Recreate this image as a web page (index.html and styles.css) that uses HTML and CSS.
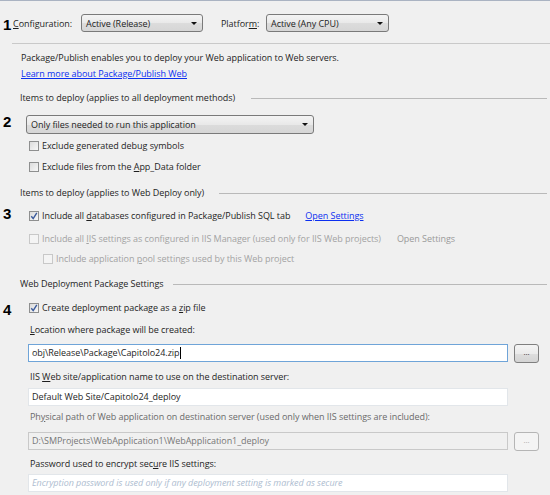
FILE: index.html
```html
<!DOCTYPE html>
<html>
<head>
<meta charset="utf-8">
<link rel="stylesheet" href="styles.css">
</head>
<body>
<div class="page">
  <div class="toolbar">
    <span class="num num-1">1</span>
    <span class="tlabel tlabel-cfg"><u>C</u>onfiguration:</span>
    <div class="select select-cfg"><span>Active (Release)</span><span class="arrow"></span></div>
    <span class="tlabel tlabel-plat">Platfor<u>m</u>:</span>
    <div class="select select-plat"><span>Active (Any CPU)</span><span class="arrow"></span></div>
  </div>
  <div class="sep"></div>

  <div class="line intro">Package/Publish enables you to deploy your Web application to Web servers.</div>
  <div class="line intro"><a class="link" href="#">Learn more about Package/Publish Web</a></div>

  <div class="heading h1"><span>Items to deploy (applies to all deployment methods)</span><span class="rule"></span></div>

  <div class="row row-2">
    <span class="num num-2">2</span>
    <div class="select select-files"><span>Only files needed to run this application</span><span class="arrow"></span></div>
  </div>
  <div class="check c1"><span class="box"></span><span>Exclude <u>g</u>enerated debug symbols</span></div>
  <div class="check c2"><span class="box"></span><span>Exclude files from the <u>A</u>pp_Data folder</span></div>

  <div class="heading h2"><span>Items to deploy (applies to Web Deploy only)</span><span class="rule"></span></div>

  <div class="row row-3">
    <span class="num num-3">3</span>
    <div class="check c3"><span class="box checked"><svg viewBox="0 0 10 10" width="10" height="10"><path d="M2.3 5.2 L4.2 7.6 L7.8 1.8" fill="none" stroke="#3a5a9c" stroke-width="1.4"/></svg></span><span>Include all <u>d</u>atabases configured in Package/Publish SQL tab</span><a class="link open-link" href="#">Open Settings</a></div>
  </div>
  <div class="check c4 disabled"><span class="box"></span><span>Include all <u>I</u>IS settings as configured in IIS Manager (used only for IIS Web projects)</span><span class="open-dis">Open Settings</span></div>
  <div class="check c5 disabled"><span class="box"></span><span>Include application <u>p</u>ool settings used by this Web project</span></div>

  <div class="heading h3"><span>Web Deployment Package Settings</span><span class="rule"></span></div>

  <div class="row row-4">
    <span class="num num-4">4</span>
    <div class="check c6"><span class="box checked"><svg viewBox="0 0 10 10" width="10" height="10"><path d="M2.3 5.2 L4.2 7.6 L7.8 1.8" fill="none" stroke="#3a5a9c" stroke-width="1.4"/></svg></span><span>Create deployment package as a <u>z</u>ip file</span></div>
  </div>

  <div class="field-label l1"><u>L</u>ocation where package will be created:</div>
  <div class="field-row f1">
    <div class="input focused">obj\Release\Package\Capitolo24.zip<span class="caret"></span></div>
    <div class="btn">...</div>
  </div>

  <div class="field-label l2">IIS <u>W</u>eb site/application name to use on the destination server:</div>
  <div class="field-row f2">
    <div class="input soft">Default Web Site/Capitolo24_deploy</div>
  </div>

  <div class="field-label l3 dim">Ph<u>y</u>sical path of Web application on destination server (used only when IIS settings are included):</div>
  <div class="field-row f3">
    <div class="input off">D:\SMProjects\WebApplication1\WebApplication1_deploy</div>
    <div class="btn off">...</div>
  </div>

  <div class="field-label l4">Password used to encrypt sec<u>u</u>re IIS settings:</div>
  <div class="field-row f4">
    <div class="input soft placeholder">Encryption password is used only if any deployment setting is marked as secure</div>
  </div>
</div>
</body>
</html>
```

FILE: styles.css
```css
* { box-sizing: border-box; }
html, body { margin: 0; padding: 0; }
body {
  width: 550px;
  height: 495px;
  overflow: hidden;
  background: #f0f0f0;
  border-top: 1px solid #aab3c2;
  font-family: "Open Sans", "Noto Sans", sans-serif;
  font-size: 9px;
  letter-spacing: -0.05px;
  color: #1e1e1e;
}
u { text-decoration: underline; text-underline-offset: 1px; }

.page { display: flex; flex-direction: column; }

/* numbers (annotations) */
.num {
  font-family: "Liberation Sans", Arial, sans-serif;
  font-weight: bold;
  font-size: 15px;
  line-height: 16px;
  letter-spacing: 0;
  color: #000;
  flex: 0 0 auto;
}

/* toolbar */
.toolbar {
  display: flex;
  align-items: center;
  height: 18px;
  margin-top: 13px;
  padding-left: 3px;
}
.num-1 { width: 10px; margin-top: 4px; }
.tlabel { white-space: nowrap; }
.tlabel-cfg { width: 68px; }
.tlabel-plat { width: 45px; margin-left: 18px; }

.select {
  display: flex;
  align-items: center;
  justify-content: space-between;
  height: 18px;
  padding: 0 5px 0 4px;
  border: 1px solid #7a7a7a;
  border-radius: 3px;
  background: linear-gradient(#f4f4f4, #e9e9e9 50%, #dcdcdc 51%, #d6d6d6);
  white-space: nowrap;
}
.select-cfg { width: 122px; }
.select-plat { width: 123px; }
.arrow {
  width: 0; height: 0;
  border-left: 3px solid transparent;
  border-right: 3px solid transparent;
  border-top: 3px solid #111;
}

.sep {
  height: 1px;
  margin: 11px 0 0 12px;
  background: #c9c9c9;
}

.line { height: 16px; line-height: 16px; padding-left: 21px; white-space: nowrap; }
.sep + .intro { margin-top: 6px; }
.link { color: #0b2ff0; text-decoration: underline; }

/* headings */
.heading {
  display: flex;
  align-items: center;
  height: 16px;
  line-height: 16px;
  padding-left: 20px;
  white-space: nowrap;
}
.heading .rule { flex: 1; height: 1px; background: #b9b9b9; margin-right: 3px; }
.h1 { margin-top: 8px; }
.h1 .rule { margin-left: 16px; }
.h2 { margin-top: 10px; }
.h2 .rule { margin-left: 15px; }
.h3 { margin-top: 9px; }
.h3 .rule { margin-left: 9px; }

/* rows with number gutter */
.row { display: flex; align-items: flex-start; padding-left: 3px; }
.row .num { width: 23px; }
.row-2 { margin-top: 9px; height: 19px; }
.num-2 { margin-top: -1px; }
.select-files { width: 288px; height: 19px; }
.row-3 { margin-top: 7px; }
.num-3 { margin-top: -2px; }
.row-4 { margin-top: 8px; }
.num-4 { margin-top: 2px; }

/* checkboxes */
.check {
  display: flex;
  align-items: center;
  height: 16px;
  line-height: 16px;
  padding-left: 29px;
  white-space: nowrap;
}
.row .check { padding-left: 3px; }
.box {
  width: 10px; height: 10px;
  margin-right: 3px;
  border: 1px solid #8e8f8f;
  background: linear-gradient(135deg, #dcdcdc, #f7f7f7);
  display: flex;
  flex: 0 0 auto;
}
.box svg { display: block; margin: -1px; }
.c1 { margin-top: 4px; }
.c2 { margin-top: 5px; }
.c4 { margin-top: 7px; }
.c5 { margin-top: 4px; padding-left: 43px; }
.disabled { color: #a3a3a3; }
.disabled .box { border-color: #c8c8c8; background: #f4f4f4; }
.open-link { margin-left: 15px; }
.open-dis { margin-left: 16px; color: #9a9a9a; }

/* fields */
.field-label { height: 16px; line-height: 16px; padding-left: 30px; white-space: nowrap; }
.dim { color: #6a6a6a; }
.l1 { margin-top: 4px; }
.l2 { margin-top: 6px; }
.l3 { margin-top: 3px; }
.l4 { margin-top: 5px; }

.field-row { display: flex; align-items: flex-start; padding-left: 28px; }
.f1 { margin-top: 6px; height: 19px; }
.f2 { margin-top: 3px; }
.f3 { margin-top: 7px; height: 19px; }
.f4 { margin-top: 2px; }

.input {
  width: 480px;
  height: 18px;
  line-height: 16px;
  padding-left: 3px;
  background: #fff;
  border: 1px solid #abadb3;
  white-space: nowrap;
  overflow: hidden;
  display: flex;
  align-items: center;
}
.input.focused { border-color: #6fa4d8; }
.caret { width: 1px; height: 12px; background: #000; margin-left: 1px; }
.input.soft { border-color: #e2e6ea; }
.input.off { background: #f0f0f0; border-color: #c9c9c9; color: #777; }
.placeholder { color: #aebdd0; font-style: italic; }

.btn {
  width: 25px;
  height: 19px;
  margin-left: 6px;
  border: 1px solid #7f7f7f;
  border-radius: 3px;
  background: linear-gradient(#f4f4f4, #ebebeb 50%, #dddddd 51%, #d4d4d4);
  font-size: 8px;
  line-height: 13px;
  text-align: center;
  color: #333;
}
.btn.off { border-color: #b5b5b5; background: #f4f4f4; color: #aaa; }
```
